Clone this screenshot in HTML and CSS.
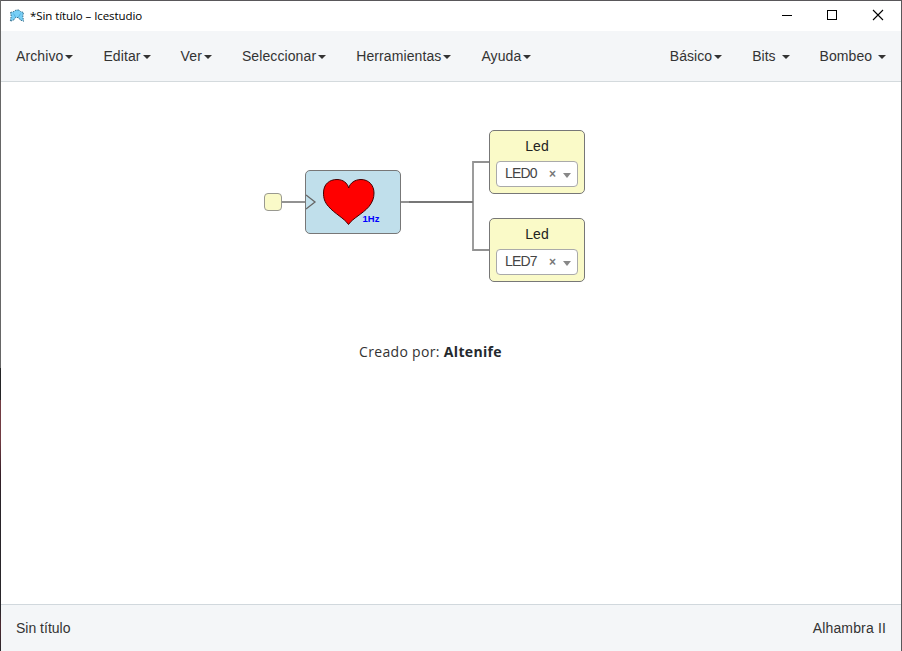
FILE: index.html
```
<!DOCTYPE html>
<html lang="es">
<head>
<meta charset="utf-8">
<title>*Sin título – Icestudio</title>
<link rel="stylesheet" href="styles.css">
</head>
<body>
<div class="window">
  <header class="titlebar">
    <svg class="logo" width="16" height="14" viewBox="0 0 16 14">
      <path d="M1.500 3.500L5 2.500 7 1h3l1.500 1.500L14.500 3.500 13.800 7 14.500 12.300 11 10.800 9.500 8.500h-3L5 10.800 1.300 12.300 2.200 7z" fill="#78cff6"/>
      <path d="M1.500 3.500L5 2.500 7 1h3l1.500 1.500L14.500 3.500 13.800 7 14.500 12.300 11 10.800 9.500 8.500h-3L5 10.800 1.300 12.300 2.200 7z" fill="none" stroke="#28617f" stroke-width=".9" stroke-dasharray="1.500 1"/>
      <path d="M4.500 4.500l2 3.500M11.500 4.500l-2 3.500" stroke="#4baada" stroke-width=".8"/>
    </svg>
    <span class="title">*Sin título – Icestudio</span>
    <svg class="controls" width="102" height="12" viewBox="0 0 102 12" fill="none" stroke="#000">
      <path d="M0 6.500h10M45.500 1.500h9v9h-9z" shape-rendering="crispEdges"/>
      <path d="M91 1l10 10M101 1L91 11" stroke-width="1.100"/>
    </svg>
  </header>
  <nav class="menubar">
    <div class="group">
      <span class="item">Archivo<i class="caret"></i></span>
      <span class="item">Editar<i class="caret"></i></span>
      <span class="item">Ver<i class="caret"></i></span>
      <span class="item">Seleccionar<i class="caret"></i></span>
      <span class="item">Herramientas<i class="caret"></i></span>
      <span class="item">Ayuda<i class="caret"></i></span>
    </div>
    <div class="group tools">
      <span class="item">Básico<i class="caret"></i></span>
      <span class="item">Bits <i class="caret"></i></span>
      <span class="item">Bombeo <i class="caret"></i></span>
    </div>
  </nav>
  <main class="canvas">
    <svg class="wires" width="900" height="300" viewBox="1 82 900 300" fill="none">
      <path d="M281 202h24M401 202h72M473 202V162h16M473 202V250h16" stroke="#929292" stroke-width="1.800"/>
      <path d="M409 202h64" stroke="#777" stroke-width="1.800"/>
    </svg>
    <div class="node clock-in"></div>
    <div class="node heart">
      <svg width="94" height="62" viewBox="306 171 94 62">
        <path d="M306 195l9 7-9 7" fill="none" stroke="#666" stroke-width="1.300"/>
        <path d="M348.500 224.500C344 218 335 214 328.500 206.500C324.500 202 323.500 198 323.500 193C323.500 184 329.500 179.500 337 179.500C343 179.500 347.500 183 348.700 188C350 183 355 179.500 361 179.500C368.500 179.500 374 185 374 193C374 198 372.500 202 369 206.500C362.500 214 353 218 348.500 224.500z" fill="#f00" stroke="#400" stroke-width="1"/>
        <text class="hz" x="362.500" y="222">1Hz</text>
      </svg>
    </div>
    <div class="node led led-a">
      <span class="led-name">Led</span>
      <div class="select"><span class="value">LED0</span><span class="clear">×</span><i class="arrow"></i></div>
    </div>
    <div class="node led led-b">
      <span class="led-name">Led</span>
      <div class="select"><span class="value">LED7</span><span class="clear">×</span><i class="arrow"></i></div>
    </div>
    <p class="node note">Creado por: <b>Altenife</b></p>
  </main>
  <footer class="statusbar"><span>Sin título</span><span class="board">Alhambra II</span></footer>
</div>
</body>
</html>
```
FILE: styles.css
```
* { box-sizing: border-box; }
body {
  margin: 0;
  font: 14px/20px "Liberation Sans", Arial, sans-serif;
  color: #333;
  background: linear-gradient(#666 0 368px, #242426 368px 400px, #713b42 400px 440px, #351e27 475px, #292329 500px, #29272b 610px, #4d2830 625px, #29272b);
}
.window {
  display: flex;
  flex-direction: column;
  height: 651px;
  border: solid #59575a;
  border-width: 1px 1px 0 0;
  margin-left: 1px;
  background: #fff;
}
.titlebar {
  display: flex;
  align-items: center;
  height: 30px;
  padding: 0 17px 0 8px;
}
.logo { margin-top: -1px; }
.title {
  margin-left: 5px;
  font: 11.500px/16px "Open Sans", "Noto Sans", sans-serif;
  letter-spacing: -0.08px;
  color: #000;
}
.controls { margin-left: auto; margin-top: -2px; }
.menubar {
  display: flex;
  justify-content: space-between;
  height: 51px;
  padding: 15px 15px 0;
  background: #f4f6f8;
  border-bottom: 1px solid #d4dadd;
}
.group { display: flex; gap: 30px; }
.item { white-space: pre; letter-spacing: 0.1px; }
.tools .item { letter-spacing: 0.05px; }
.caret {
  display: inline-block;
  margin-left: 2px;
  vertical-align: middle;
  border: solid transparent;
  border-width: 4px 4px 0;
  border-top-color: #333;
}
.canvas { position: relative; flex: 1; overflow: hidden; }
.wires { display: block; }
.node { position: absolute; }
.clock-in {
  left: 263px;
  top: 111px;
  width: 18px;
  height: 18px;
  border: 1.500px solid #999990;
  border-radius: 4px;
  background: #fafac8;
}
.heart {
  left: 304px;
  top: 88px;
  width: 96px;
  height: 64px;
  border: 1px solid #777;
  border-radius: 5px;
  background: #c0dfeb;
}
.heart svg { display: block; }
.hz { font: bold 9.500px "Liberation Sans", Arial, sans-serif; fill: #00f; }
.led {
  display: flex;
  flex-direction: column;
  align-items: center;
  left: 488px;
  width: 96px;
  height: 64px;
  padding-top: 5px;
  border: 1px solid #777;
  border-radius: 5px;
  background: #fafac8;
}
.led-a { top: 48px; }
.led-b { top: 136px; }
.led-name { color: #222; }
.select {
  display: flex;
  align-items: center;
  width: 82px;
  height: 26px;
  margin-top: 5px;
  padding: 0 6px 0 8px;
  border: 1px solid #aaa;
  border-radius: 4px;
  background: #fff;
}
.value { width: 44px; color: #444; margin-top: -2px; letter-spacing: -0.8px; }
.clear { width: 14px; font-size: 12px; font-weight: bold; color: #777; }
.arrow {
  border: solid transparent;
  border-width: 5px 4px 0;
  border-top-color: #888;
  margin-top: 3px;
}
.note {
  left: 358px;
  top: 260px;
  margin: 0;
  font: 14px/20px "Open Sans", "Noto Sans", sans-serif;
  letter-spacing: 0.33px;
  white-space: nowrap;
}
.note b { color: #24292e; }
.statusbar {
  display: flex;
  justify-content: space-between;
  height: 47px;
  padding: 13px 15px 0;
  background: #f4f6f8;
  border-top: 1px solid #d1d8dd;
}
.board { letter-spacing: 0.15px; }
```
